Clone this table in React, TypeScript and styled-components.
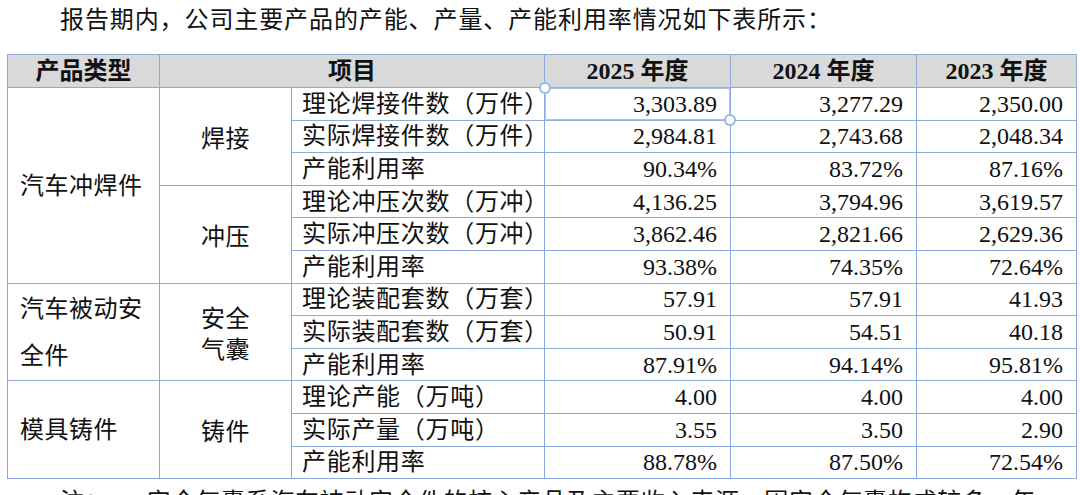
import React from "react";
import styled, { createGlobalStyle } from "styled-components";

const Global = createGlobalStyle`
  html, body { margin: 0; padding: 0; background: #ffffff; }
  body { font-family: "Liberation Serif", "Noto Sans CJK SC", serif; color: #111; }
`;

const Page = styled.div`
  width: 1080px;
  padding: 0 0 0 7px;
  box-sizing: border-box;
`;

const Para = styled.p`
  margin: 0;
  font-size: 24px;
  line-height: 40px;
  letter-spacing: 0.9px;
  padding-left: 53px;
  white-space: nowrap;
`;

const Table = styled.table`
  margin-top: 14px;
  width: 1069px;
  border-collapse: collapse;
  table-layout: fixed;
  font-size: 24px;
  line-height: 30px;
`;

const HeadRow = styled.tr`
  height: 33px;
  background: #d9d9d9;
`;

const Row = styled.tr`
  height: 32.6px;
`;

const HeadCell = styled.th`
  border: 1px solid #8eaadb;
  padding: 0;
  font-weight: bold;
  text-align: center;
  white-space: nowrap;
`;

const TypeCell = styled.td`
  border: 1px solid #8eaadb;
  padding: 2px 12px 0 12px;
  line-height: 47px;
  letter-spacing: 0.5px;
  text-align: left;
  vertical-align: middle;
`;

const SubCell = styled.td`
  border: 1px solid #8eaadb;
  padding: 6px 0 0 0;
  line-height: 31px;
  letter-spacing: 0.5px;
  text-align: center;
  vertical-align: middle;
`;

const ItemCell = styled.td`
  border: 1px solid #8eaadb;
  padding: 0 0 0 10px;
  letter-spacing: 0.7px;
  white-space: nowrap;
  overflow: visible;
  text-align: left;
`;

const NumCell = styled.td`
  border: 1px solid #8eaadb;
  padding: 0 13px 0 0;
  text-align: right;
  white-space: nowrap;
  position: relative;
`;

const Selection = styled.span`
  position: absolute;
  left: -1px;
  top: -1px;
  right: -1px;
  bottom: -1px;
  border: 2px solid rgba(140, 175, 230, 0.75);
  pointer-events: none;
`;

const Handle = styled.span<{ $pos: "tl" | "br" }>`
  position: absolute;
  width: 8px;
  height: 8px;
  border-radius: 50%;
  background: #fff;
  border: 2px solid rgba(140, 175, 230, 0.9);
  ${(p) => (p.$pos === "tl" ? "left: -7px; top: -7px;" : "right: -7px; bottom: -7px;")}
`;

const Note = styled.p`
  margin: 8px 0 0 0;
  font-size: 24px;
  line-height: 30px;
  letter-spacing: 0.7px;
  padding-left: 53px;
  white-space: nowrap;
  overflow: hidden;
  width: 1000px;
`;

type Sub = { name: string[]; rows: string[][] };
type Group = { type: string; subs: Sub[] };

const groups: Group[] = [
  {
    type: "汽车冲焊件",
    subs: [
      {
        name: ["焊接"],
        rows: [
          ["理论焊接件数（万件）", "3,303.89", "3,277.29", "2,350.00"],
          ["实际焊接件数（万件）", "2,984.81", "2,743.68", "2,048.34"],
          ["产能利用率", "90.34%", "83.72%", "87.16%"],
        ],
      },
      {
        name: ["冲压"],
        rows: [
          ["理论冲压次数（万冲）", "4,136.25", "3,794.96", "3,619.57"],
          ["实际冲压次数（万冲）", "3,862.46", "2,821.66", "2,629.36"],
          ["产能利用率", "93.38%", "74.35%", "72.64%"],
        ],
      },
    ],
  },
  {
    type: "汽车被动安全件",
    subs: [
      {
        name: ["安全", "气囊"],
        rows: [
          ["理论装配套数（万套）", "57.91", "57.91", "41.93"],
          ["实际装配套数（万套）", "50.91", "54.51", "40.18"],
          ["产能利用率", "87.91%", "94.14%", "95.81%"],
        ],
      },
    ],
  },
  {
    type: "模具铸件",
    subs: [
      {
        name: ["铸件"],
        rows: [
          ["理论产能（万吨）", "4.00", "4.00", "4.00"],
          ["实际产量（万吨）", "3.55", "3.50", "2.90"],
          ["产能利用率", "88.78%", "87.50%", "72.54%"],
        ],
      },
    ],
  },
];

export default function App() {
  let first = true;
  return (
    <Page>
      <Global />
      <Para>报告期内，公司主要产品的产能、产量、产能利用率情况如下表所示：</Para>
      <Table>
        <colgroup>
          <col style={{ width: 152 }} />
          <col style={{ width: 132 }} />
          <col style={{ width: 253 }} />
          <col style={{ width: 186 }} />
          <col style={{ width: 186 }} />
          <col style={{ width: 160 }} />
        </colgroup>
        <thead>
          <HeadRow>
            <HeadCell>产品类型</HeadCell>
            <HeadCell colSpan={2}>项目</HeadCell>
            <HeadCell>2025 年度</HeadCell>
            <HeadCell>2024 年度</HeadCell>
            <HeadCell>2023 年度</HeadCell>
          </HeadRow>
        </thead>
        <tbody>
          {groups.map((g) => {
            const total = g.subs.reduce((n, s) => n + s.rows.length, 0);
            return g.subs.map((s, si) =>
              s.rows.map((r, ri) => {
                const isFirst = first;
                first = false;
                return (
                  <Row key={g.type + si + ri}>
                    {si === 0 && ri === 0 && <TypeCell rowSpan={total}>{g.type}</TypeCell>}
                    {ri === 0 && (
                      <SubCell rowSpan={s.rows.length}>
                        {s.name.map((l, li) => (
                          <React.Fragment key={li}>
                            {li > 0 && <br />}
                            {l}
                          </React.Fragment>
                        ))}
                      </SubCell>
                    )}
                    <ItemCell>{r[0]}</ItemCell>
                    <NumCell>
                      {r[1]}
                      {isFirst && (
                        <Selection>
                          <Handle $pos="tl" />
                          <Handle $pos="br" />
                        </Selection>
                      )}
                    </NumCell>
                    <NumCell>{r[2]}</NumCell>
                    <NumCell>{r[3]}</NumCell>
                  </Row>
                );
              })
            );
          })}
        </tbody>
      </Table>
      <Note>注：1、安全气囊系汽车被动安全件的核心产品及主要收入来源，因安全气囊构成较多，年</Note>
    </Page>
  );
}
